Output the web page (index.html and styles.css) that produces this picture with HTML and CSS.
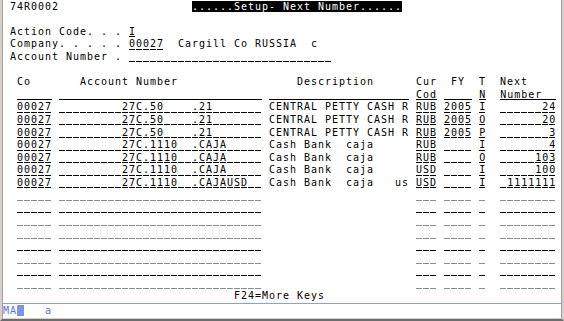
FILE: index.html
```html
<!DOCTYPE html>
<html lang="en">
<head>
    <meta charset="UTF-8">
    <meta name="viewport" content="width=device-width, initial-scale=1.0">
    <title>Setup- Next Number</title>
    <link rel="stylesheet" href="styles.css">
</head>
<body>
    <div class="window">
        <div class="term">
            <div class="screen">
                <div class="row"> 74R0002                   <span class="rev">......Setup- Next Number......</span></div>
                <div class="row"></div>
                <div class="row"> Action Code. . . <span class="fld">I</span></div>
                <div class="row"> Company. . . . . <span class="fld">00027</span>  Cargill Co RUSSIA  c</div>
                <div class="row"> Account Number . <span class="fld">                             </span></div>
                <div class="row"></div>
                <div class="row">  Co       Account Number                 Description      Cur  FY  T  Next</div>
                <div class="row">  <span class="ul">     </span> <span class="ul">                             </span> <span class="ul">                    </span> <span class="ul">Cod</span> <span class="ul">    </span> <span class="ul">N</span>  <span class="ul">Number  </span></div>

                <!-- subfile rows -->
                <div class="row">  <span class="fld">00027</span> <span class="fld">         27C.50    .21       </span> CENTRAL PETTY CASH R <span class="fld">RUB</span> <span class="fld">2005</span> <span class="fld">I</span>  <span class="fld">      24</span></div>
                <div class="row">  <span class="fld">00027</span> <span class="fld">         27C.50    .21       </span> CENTRAL PETTY CASH R <span class="fld">RUB</span> <span class="fld">2005</span> <span class="fld">O</span>  <span class="fld">      20</span></div>
                <div class="row">  <span class="fld">00027</span> <span class="fld">         27C.50    .21       </span> CENTRAL PETTY CASH R <span class="fld">RUB</span> <span class="fld">2005</span> <span class="fld">P</span>  <span class="fld">       3</span></div>
                <div class="row">  <span class="fld">00027</span> <span class="fld">         27C.1110  .CAJA     </span> Cash Bank  caja      <span class="fld">RUB</span> <span class="fld">    </span> <span class="fld">I</span>  <span class="fld">       4</span></div>
                <div class="row">  <span class="fld">00027</span> <span class="fld">         27C.1110  .CAJA     </span> Cash Bank  caja      <span class="fld">RUB</span> <span class="fld">    </span> <span class="fld">O</span>  <span class="fld">     103</span></div>
                <div class="row">  <span class="fld">00027</span> <span class="fld">         27C.1110  .CAJA     </span> Cash Bank  caja      <span class="fld">USD</span> <span class="fld">    </span> <span class="fld">I</span>  <span class="fld">     100</span></div>
                <div class="row">  <span class="fld">00027</span> <span class="fld">         27C.1110  .CAJAUSD  </span> Cash Bank  caja   us <span class="fld">USD</span> <span class="fld">    </span> <span class="fld">I</span>  <span class="fld"> 1111111</span></div>

                <!-- empty subfile rows -->
                <div class="row dim">  <span class="fld">     </span> <span class="fld">                             </span>                      <span class="fld">   </span> <span class="fld">    </span> <span class="fld"> </span>  <span class="fld">        </span></div>
                <div class="row">  <span class="fld">     </span> <span class="fld">                             </span>                      <span class="fld">   </span> <span class="fld">    </span> <span class="fld"> </span>  <span class="fld">        </span></div>
                <div class="row dim">  <span class="fld">     </span> <span class="fld">                             </span>                      <span class="fld">   </span> <span class="fld">    </span> <span class="fld"> </span>  <span class="fld">        </span></div>
                <div class="row dim">  <span class="fld">     </span> <span class="fld">                             </span>                      <span class="fld">   </span> <span class="fld">    </span> <span class="fld"> </span>  <span class="fld">        </span></div>
                <div class="row">  <span class="fld">     </span> <span class="fld">                             </span>                      <span class="fld">   </span> <span class="fld">    </span> <span class="fld"> </span>  <span class="fld">        </span></div>
                <div class="row dim">  <span class="fld">     </span> <span class="fld">                             </span>                      <span class="fld">   </span> <span class="fld">    </span> <span class="fld"> </span>  <span class="fld">        </span></div>
                <div class="row">  <span class="fld">     </span> <span class="fld">                             </span>                      <span class="fld">   </span> <span class="fld">    </span> <span class="fld"> </span>  <span class="fld">        </span></div>
                <div class="row dim">  <span class="fld">     </span> <span class="fld">                             </span>                      <span class="fld">   </span> <span class="fld">    </span> <span class="fld"> </span>  <span class="fld">        </span></div>

                <div class="row">                                 F24=More Keys</div>
            </div>
            <div class="oia">MA<span class="blk"> </span>   a</div>
        </div>
    </div>
</body>
</html>
```

FILE: styles.css
```css
body {
    margin: 0;
    background-color: #fff;
    font-family: "DejaVu Sans Mono", "Liberation Mono", monospace;
}

.window {
    width: 564px;
    height: 321px;
    box-sizing: border-box;
    border-left: 2px solid #d4d0c8;
    border-right: 2px solid #d4d0c8;
    border-bottom: 2px solid #6d6d6d;
    background-color: #fff;
    overflow: hidden;
}

.term {
    height: 100%;
    box-sizing: border-box;
    border-left: 1px solid #a5a29c;
    border-right: 1px solid #a5a29c;
    border-bottom: 1px solid #d4d0c8;
    display: flex;
    flex-direction: column;
}

.screen {
    height: 303px;
    padding-top: 0.6px;
    box-sizing: border-box;
    overflow: hidden;
}

.row {
    height: 12.6px;
    line-height: 12.6px;
    font-size: 10px;
    letter-spacing: 0.98px;
    white-space: pre;
    color: #000;
}

/* input field: dashed underline, one dash per cell */
.fld {
    background: repeating-linear-gradient(to right, #000 0 6px, transparent 6px 7px) 0 10.4px / 100% 1px no-repeat;
}

.dim .fld {
    background-image: repeating-linear-gradient(to right, #8c8c8c 0 6px, transparent 6px 7px);
}

/* plain underline for column headings */
.ul {
    background: linear-gradient(#000, #000) 0 10.4px / 100% 1px no-repeat;
}

.rev {
    background-color: #000;
    color: #fff;
}

.oia {
    flex: 1;
    border-top: 1px solid #8a9cf0;
    font-size: 10px;
    letter-spacing: 0.98px;
    line-height: 14px;
    white-space: pre;
    color: #5a72e4;
}

.blk {
    background-color: #7d92f0;
}
```
